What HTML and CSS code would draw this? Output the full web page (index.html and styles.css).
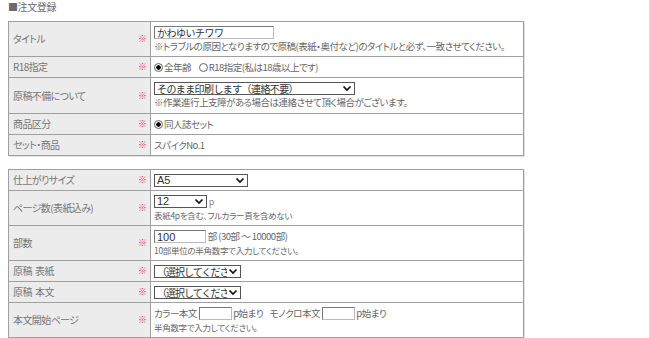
FILE: index.html
```html
<!DOCTYPE html>
<html>
<head>
	<title>注文登録</title>
	<link rel="stylesheet" href="styles.css">
</head>
<body>
<div class="page">
	<h2 class="heading">■注文登録</h2>

	<table class="form">
		<tr>
			<th>タイトル<span class="req">※</span></th>
			<td>
				<div class="line"><input type="text" class="txt title-input" value="かわゆいチワワ"></div>
				<div class="line long">※トラブルの原因となりますので原稿(表紙・奥付など)のタイトルと必ず、一致させてください。</div>
			</td>
		</tr>
		<tr>
			<th>R18指定<span class="req">※</span></th>
			<td>
				<label class="radio"><input type="radio" name="r18" checked>全年齢</label>
				<label class="radio"><input type="radio" name="r18">R18指定(私は18歳以上です)</label>
			</td>
		</tr>
		<tr class="tall">
			<th>原稿不備について<span class="req">※</span></th>
			<td>
				<div class="line"><span class="sel sel-wide"><select><option>そのまま印刷します（連絡不要）</option></select><svg viewBox="0 0 12 11"><path d="M2.5 3.5l3.5 3.5 3.5-3.5" /></svg></span></div>
				<div class="line">※作業進行上支障がある場合は連絡させて頂く場合がございます。</div>
			</td>
		</tr>
		<tr>
			<th>商品区分<span class="req">※</span></th>
			<td><label class="radio"><input type="radio" name="kind" checked>同人誌セット</label></td>
		</tr>
		<tr>
			<th>セット・商品<span class="req">※</span></th>
			<td>スパイクNo.1</td>
		</tr>
	</table>

	<table class="form">
		<tr>
			<th>仕上がりサイズ<span class="req">※</span></th>
			<td><span class="sel sel-size"><select><option>A5</option></select><svg viewBox="0 0 12 11"><path d="M2.5 3.5l3.5 3.5 3.5-3.5" /></svg></span></td>
		</tr>
		<tr>
			<th>ページ数(表紙込み)<span class="req">※</span></th>
			<td>
				<div class="line"><span class="sel sel-num"><select><option>12</option></select><svg viewBox="0 0 12 11"><path d="M2.5 3.5l3.5 3.5 3.5-3.5" /></svg></span> <span class="unit">p</span></div>
				<div class="line note">表紙4pを含む、フルカラー頁を含めない</div>
			</td>
		</tr>
		<tr>
			<th>部数<span class="req">※</span></th>
			<td>
				<div class="line"><input type="text" class="txt num-input" value="100"> 部 (30部 ～ 10000部)</div>
				<div class="line note">10部単位の半角数字で入力してください。</div>
			</td>
		</tr>
		<tr>
			<th>原稿&nbsp;&nbsp;表紙<span class="req">※</span></th>
			<td><span class="sel sel-choose"><select><option>（選択してください）</option></select><svg viewBox="0 0 12 11"><path d="M2.5 3.5l3.5 3.5 3.5-3.5" /></svg></span></td>
		</tr>
		<tr>
			<th>原稿&nbsp;&nbsp;本文<span class="req">※</span></th>
			<td><span class="sel sel-choose"><select><option>（選択してください）</option></select><svg viewBox="0 0 12 11"><path d="M2.5 3.5l3.5 3.5 3.5-3.5" /></svg></span></td>
		</tr>
		<tr>
			<th>本文開始ページ<span class="req">※</span></th>
			<td>
				<div class="line">カラー本文 <input type="text" class="txt page-input"> p始まり&nbsp;&nbsp;&nbsp;&nbsp;モノクロ本文 <input type="text" class="txt page-input"> p始まり</div>
				<div class="line note">半角数字で入力してください。</div>
			</td>
		</tr>
	</table>
</div>
</body>
</html>
```

FILE: styles.css
```css
body {
	margin: 0;
	background: #fff;
	color: #666;
	font-family: "Noto Sans CJK JP", "Liberation Sans", sans-serif;
	font-size: 10px;
	font-feature-settings: "palt";
}
.page {
	box-sizing: border-box;
	width: 650px;
	min-height: 338px;
	padding: 0 0 0 8px;
	border-right: 1px solid #dcdcdc;
}
.heading {
	margin: 0;
	padding-top: 1px;
	height: 20px;
	font-size: 10px;
	font-weight: normal;
	line-height: 12px;
	letter-spacing: -0.4px;
	color: #6a6a6a;
}
.form {
	border-collapse: collapse;
	width: 516px;
	margin-bottom: 13px;
	box-shadow: 1px 1px 0 #e2e2e2;
}
.form th,
.form td {
	border: 1px solid #a0a0a0;
	padding: 3px 3px;
	height: 14px;
	line-height: 14px;
	vertical-align: middle;
	text-align: left;
	font-weight: normal;
}
.form tr.tall td {
	padding-bottom: 4px;
}
.form th {
	width: 134px;
	background: #ececec;
	color: #777;
	padding-left: 4px;
	letter-spacing: -0.6px;
}
.req {
	float: right;
	color: #e6384e;
	font-size: 9px;
	letter-spacing: 0;
}
.form td {
	color: #666;
	background: #fff;
	font-size: 9.5px;
	letter-spacing: -0.5px;
}
.line {
	height: 14px;
	line-height: 14px;
	white-space: nowrap;
	overflow: visible;
}
.long {
	letter-spacing: -0.5px;
}
.note {
	font-size: 8.5px;
	letter-spacing: -0.3px;
	color: #666;
}
.unit {
	font-size: 9px;
	color: #888;
}
.txt {
	box-sizing: border-box;
	height: 13px;
	margin: 0;
	padding: 0 2px;
	border: 1px solid #777;
	border-right-color: #bbb;
	border-bottom-color: #bbb;
	font-family: "Noto Sans CJK JP", "Liberation Sans", sans-serif;
	font-size: 10px;
	line-height: 11px;
	letter-spacing: -0.5px;
	color: #333;
	vertical-align: top;
	margin-top: 1px;
}
.title-input {
	width: 120px;
}
.num-input {
	width: 52px;
	font-family: "Liberation Sans", sans-serif;
	font-size: 11px;
	letter-spacing: 0;
}
.page-input {
	width: 33px;
}
.radio {
	margin-right: 6px;
}
.radio input {
	appearance: none;
	box-sizing: border-box;
	width: 9px;
	height: 9px;
	margin: 0 1px 0 0;
	border: 1px solid #666;
	border-radius: 50%;
	background: #fff;
	vertical-align: -1px;
}
.radio input:checked {
	background: radial-gradient(circle, #000 0 2px, #fff 2.5px);
}
.sel {
	position: relative;
	display: inline-block;
	vertical-align: top;
	margin-top: 1px;
	height: 13px;
}
.sel select {
	appearance: none;
	box-sizing: border-box;
	height: 13px;
	margin: 0;
	padding: 0 14px 0 2px;
	border: 1px solid #555;
	border-radius: 0;
	background: #fff;
	color: #333;
	font-family: "Noto Sans CJK JP", "Liberation Sans", sans-serif;
	font-size: 10px;
	line-height: 11px;
	letter-spacing: -0.6px;
	display: block;
}
.sel svg {
	position: absolute;
	right: 2px;
	top: 1px;
	width: 12px;
	height: 11px;
	background: #fff;
	fill: none;
	stroke: #111;
	stroke-width: 1.7;
}
.sel-wide select {
	width: 201px;
}
.sel-size select {
	width: 94px;
	font-family: "Liberation Sans", sans-serif;
	font-size: 11px;
	letter-spacing: 0;
}
.sel-num select {
	width: 53px;
	font-family: "Liberation Sans", sans-serif;
	font-size: 11px;
	letter-spacing: 0;
}
.sel-choose select {
	width: 87px;
	padding-right: 4px;
	letter-spacing: -1px;
}
```
